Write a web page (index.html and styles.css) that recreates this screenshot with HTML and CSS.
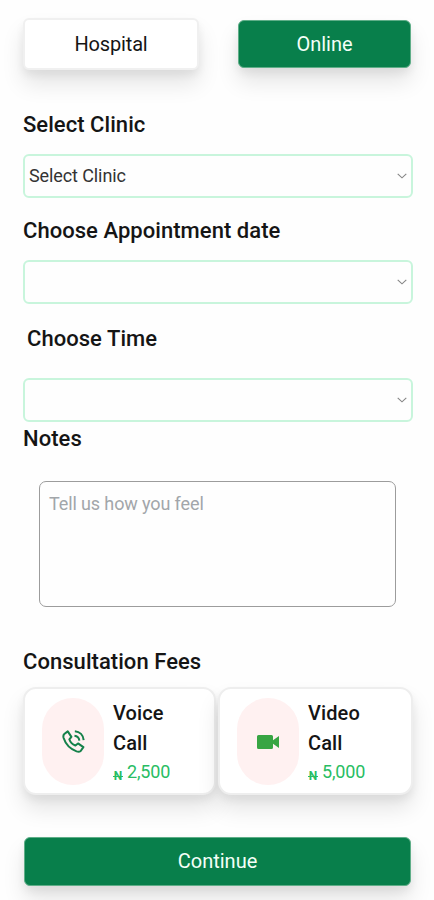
FILE: index.html
```html
<!DOCTYPE html>
<html lang="en">
<head>
<meta charset="utf-8">
<title>Book Appointment</title>
<link rel="stylesheet" href="styles.css">
</head>
<body>
<main class="booking">
  <div class="tabs">
    <button class="btn btn-light" type="button">Hospital</button>
    <button class="btn btn-green" type="button">Online</button>
  </div>

  <h2 class="label label-clinic">Select Clinic</h2>
  <div class="select"><span>Select Clinic</span><svg class="chevron" viewBox="0 0 10 6"><path d="M.7.8 5 4.8 9.3.8"/></svg></div>

  <h2 class="label label-date">Choose Appointment date</h2>
  <div class="select"><span></span><svg class="chevron" viewBox="0 0 10 6"><path d="M.7.8 5 4.8 9.3.8"/></svg></div>

  <h2 class="label label-time">Choose Time</h2>
  <div class="select"><span></span><svg class="chevron" viewBox="0 0 10 6"><path d="M.7.8 5 4.8 9.3.8"/></svg></div>

  <h2 class="label label-notes">Notes</h2>
  <div class="notes">Tell us how you feel</div>

  <h2 class="label label-fees">Consultation Fees</h2>
  <div class="fees">
    <article class="card">
      <div class="pill">
        <svg class="phone" viewBox="0 0 24 24"><path d="M2.400 4.200 6 1.400l3.800 5.800-2.100 2.700c1 2.900 3.200 5 6.300 6.300l2.700-2.200 5.600 3.900-2.800 4c-1.200.9-2.700.9-4.300.4C8.800 19.900 3.800 14.900 1.700 8.400 1.200 6.700 1.300 5.200 2.400 4.200Z"/><path d="M13.400 1.400c5.200.4 8.800 4 9.200 9.200M13 6c3 .3 4.800 2.100 5.100 5"/></svg>
      </div>
      <div class="info">
        <h3>Voice Call</h3>
        <p><span class="naira">N</span><span class="amount">2,500</span></p>
      </div>
    </article>
    <article class="card">
      <div class="pill">
        <svg class="video" viewBox="0 0 22 14"><path d="M1.500 0h13A1.500 1.500 0 0 1 16 1.500v3.800L22 1v12l-6-4.300v3.800a1.500 1.500 0 0 1-1.500 1.500h-13A1.500 1.500 0 0 1 0 12.500v-11A1.500 1.500 0 0 1 1.500 0Z"/></svg>
      </div>
      <div class="info">
        <h3>Video Call</h3>
        <p><span class="naira">N</span><span class="amount">5,000</span></p>
      </div>
    </article>
  </div>

  <button class="btn btn-green btn-wide" type="button">Continue</button>
</main>
</body>
</html>
```
FILE: styles.css
```css
* { box-sizing: border-box; }
html { overflow: hidden; }
body {
  margin: 0;
  height: 900px;
  overflow: hidden;
  background: #fefefe;
  color: #151515;
  font-family: Roboto, "Liberation Sans", sans-serif;
}
.booking { padding: 18px 21px 0 23px; }
.tabs {
  display: grid;
  grid-template-columns: 176px 173px;
  justify-content: space-between;
  align-items: center;
  padding-right: 2px;
  height: 52px;
}
.btn {
  display: flex;
  align-items: center;
  justify-content: center;
  padding: 0 0 1px;
  border-radius: 6px;
  font: 400 20px/24px Roboto, "Liberation Sans", sans-serif;
  box-shadow: 0 14px 22px rgba(0, 0, 0, 0.1), 0 5px 8px rgba(0, 0, 0, 0.06);
}
.btn-light { height: 52px; border: 2px solid #f0f0f0; background: #fff; color: #151515; letter-spacing: -0.15px; }
.btn-green { height: 48px; border: 1px solid #5fae88; background: #087f4b; color: #f4fff8; }
.btn-wide { width: 387px; height: 49px; margin: 42px 0 0 1px; }
.label { margin: 0; font-size: 22px; line-height: 28px; font-weight: 500; letter-spacing: 0.05px; }
.label-clinic { margin: 41px 0 15px; }
.label-date { margin: 19px 0 15px; }
.label-time { margin: 21px 0 25px 4px; }
.label-notes { margin: 3px 0 28px; }
.label-fees { margin: 41px 0 11px; }
.select {
  display: flex;
  align-items: center;
  justify-content: space-between;
  height: 44px;
  padding: 0 4px;
  border: 2px solid #c8f5dc;
  border-radius: 6px;
  color: #333;
  font-size: 18px;
  line-height: 22px;
  letter-spacing: -0.1px;
}
.chevron { width: 10px; height: 6px; fill: none; stroke: #858585; stroke-width: 1.1; }
.notes {
  height: 126px;
  margin: 0 17px 0 16px;
  padding: 10px 9px;
  border: 1px solid #9c9c9c;
  border-radius: 7px;
  color: #a2a6aa;
  font-size: 18px;
  line-height: 24px;
  letter-spacing: -0.12px;
}
.fees { display: grid; grid-template-columns: 193px 195px; gap: 2px; }
.card {
  display: flex;
  height: 108px;
  padding: 9px 0 0 17px;
  border: 2px solid #eee;
  border-radius: 13px;
  background: #fff;
  box-shadow: 0 14px 22px rgba(0, 0, 0, 0.1), 0 5px 8px rgba(0, 0, 0, 0.06);
}
.pill {
  display: flex;
  align-items: center;
  justify-content: center;
  width: 62px;
  height: 87px;
  border-radius: 31px;
  background: #fff1f1;
}
.phone { width: 23px; height: 23px; fill: none; stroke: #15814a; stroke-width: 2.1; stroke-linejoin: round; }
.video { width: 22px; height: 14px; fill: #38a543; }
.info { width: 68px; margin-left: 9px; }
.info h3 { margin: 0; font-size: 20px; line-height: 30px; font-weight: 500; letter-spacing: 0.1px; }
.info p { display: flex; align-items: center; gap: 4px; margin: 0; height: 26px; color: #28bd63; }
.naira {
  position: relative;
  width: 10px;
  padding-top: 10px;
  font-size: 12px;
  line-height: 14px;
  font-weight: 700;
  text-align: center;
}
.naira::after {
  content: "";
  position: absolute;
  left: 0;
  right: 0;
  bottom: 6px;
  height: 1px;
  background: currentColor;
}
.amount { font-size: 18px; letter-spacing: -0.15px; }
```
